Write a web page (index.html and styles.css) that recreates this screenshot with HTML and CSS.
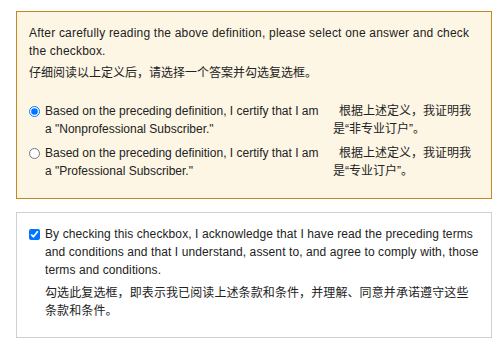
FILE: index.html
```html
<!DOCTYPE html>
<html>
<head>
<title>Subscriber Status</title>
<link rel="stylesheet" href="styles.css">
</head>
<body>
<div class="page">
    <div class="notice-box">
        <p class="intro">After carefully reading the above definition, please select one answer and check the checkbox.</p>
        <p class="intro-cn">仔细阅读以上定义后，请选择一个答案并勾选复选框。</p>
        <div class="options">
            <label class="option">
                <input type="radio" name="subscriber" class="option-input" checked>
                <span class="option-en">Based on the preceding definition, I certify that I am a "Nonprofessional Subscriber."</span>
                <span class="option-cn">根据上述定义，我证明我是“非专业订户”。</span>
            </label>
            <label class="option">
                <input type="radio" name="subscriber" class="option-input">
                <span class="option-en">Based on the preceding definition, I certify that I am a "Professional Subscriber."</span>
                <span class="option-cn">根据上述定义，我证明我是“专业订户”。</span>
            </label>
        </div>
    </div>

    <div class="agree-box">
        <label class="agree-row">
            <input type="checkbox" class="option-input" checked>
            <span class="agree-text">
                <span class="agree-en">By checking this checkbox, I acknowledge that I have read the preceding terms and conditions and that I understand, assent to, and agree to comply with, those terms and conditions.</span>
                <span class="agree-cn">勾选此复选框，即表示我已阅读上述条款和条件，并理解、同意并承诺遵守这些条款和条件。</span>
            </span>
        </label>
    </div>
</div>
</body>
</html>
```

FILE: styles.css
```css
body {
    margin: 0;
    background: #ffffff;
    font-family: "Liberation Sans", "Noto Sans CJK SC", sans-serif;
    font-size: 12px;
    line-height: 18px;
    color: #222222;
}

.page {
    padding: 11px 9px 0 16px;
}

.notice-box {
    background: #fdf6e5;
    border: 1px solid #bf8a22;
    padding: 12px 12px 18px 12px;
}

.intro {
    margin: 0 0 4px 0;
    letter-spacing: 0.2px;
}

.intro-cn {
    margin: 0 0 20px 0;
}

.options {
    display: flex;
    flex-direction: column;
    gap: 6px;
}

.option {
    display: flex;
    align-items: flex-start;
    cursor: pointer;
}

.option-input {
    width: 11px;
    height: 11px;
    margin: 4px 5px 0 0;
    flex-shrink: 0;
}

.option-en {
    width: 283px;
    flex-shrink: 0;
}

.option-cn {
    width: 146px;
    margin-left: 5px;
    text-indent: 6px;
}

.agree-box {
    margin-top: 13px;
    border: 1px solid #cdd0d4;
    padding: 12px 12px 17px 12px;
}

.agree-row {
    display: flex;
    align-items: flex-start;
    cursor: pointer;
}

.agree-text {
    display: flex;
    flex-direction: column;
    gap: 5px;
}

.agree-en {
    letter-spacing: 0.1px;
}

.agree-cn {
    letter-spacing: 0.1px;
}
```
